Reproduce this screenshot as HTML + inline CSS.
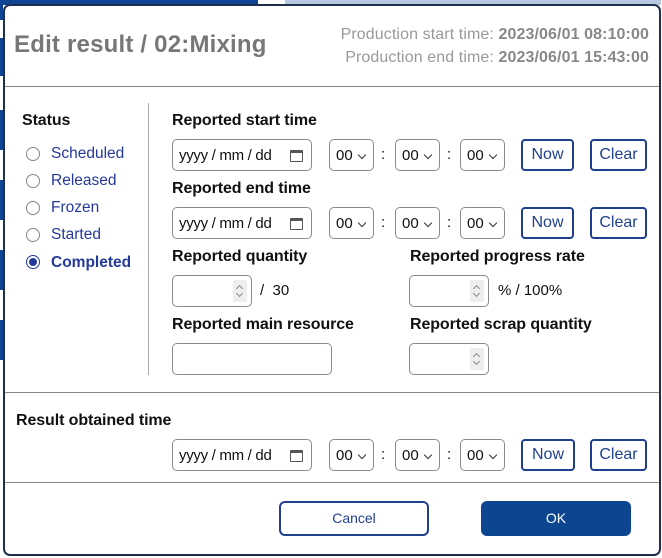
<!DOCTYPE html>
<html><head><style>
*{box-sizing:border-box;margin:0;padding:0}
body{width:662px;height:558px;background:#fff;position:relative;overflow:hidden;font-family:"Liberation Sans",Arial,sans-serif;color:#111}
.a{position:absolute}
.modal{left:3px;top:4px;width:658px;height:552px;border:2px solid #1f2d4f;border-radius:7px;background:#fff}
.lbl{font-weight:bold;font-size:16px;color:#111;letter-spacing:-0.1px}
.inp{border:1px solid #8a8a8a;border-radius:5px;background:#fff}
.date{width:140px;height:32px;font-size:15px;padding:7px 0 0 6px;letter-spacing:-0.3px}
.sel{width:45px;height:32px;font-size:15px;padding:7px 0 0 6px}
.sel:after{content:"";position:absolute;right:8px;top:12px;width:5px;height:5px;border-right:1.5px solid #333;border-bottom:1.5px solid #333;transform:rotate(45deg)}
.colon{font-size:15px}
.btn{height:32px;border:2px solid #1f3f8f;border-radius:4px;color:#1f3f8f;font-size:16px;text-align:center;line-height:28px;background:#fff}
.radio{width:14px;height:14px;border:1px solid #888;border-radius:50%}
.rl{font-size:15.5px;color:#24399a}
.spin{width:14px;height:22px;background:#eee;top:4px;right:4px}
.spin:before,.spin:after{content:"";position:absolute;left:4px;width:4px;height:4px;border-left:1px solid #888;border-top:1px solid #888}
.spin:before{top:6px;transform:rotate(45deg)}
.spin:after{top:11px;transform:rotate(225deg)}
.cal{width:13px;height:12px;border:1.5px solid #555;border-top-width:3px;border-radius:1px;right:8px;top:10px}
</style></head><body>
<div class="a" style="left:0;top:0;width:3px;height:20px;background:#0e4592"></div>
<div class="a" style="left:0;top:38px;width:3px;height:38px;background:#0e4592"></div>
<div class="a" style="left:0;top:110px;width:3px;height:40px;background:#0e4592"></div>
<div class="a" style="left:0;top:180px;width:3px;height:40px;background:#0e4592"></div>
<div class="a" style="left:0;top:250px;width:3px;height:40px;background:#0e4592"></div>
<div class="a" style="left:0;top:320px;width:3px;height:40px;background:#0e4592"></div>
<div class="a" style="left:3px;top:0;width:255px;height:5px;background:#0e4592"></div>
<div class="a" style="left:285px;top:0;width:376px;height:5px;background:#b8c8de"></div>
<div class="a modal"></div>
<div class="a" style="left:14px;top:31px;font-size:24px;color:#777;font-weight:bold;letter-spacing:0.2px">Edit result / 02:Mixing</div>
<div class="a" style="right:13px;top:23px;font-size:16px;color:#999;text-align:right;line-height:23px;letter-spacing:0.1px">Production start time: <b style="color:#888">2023/06/01 08:10:00</b><br>Production end time: <b style="color:#888">2023/06/01 15:43:00</b></div>
<div class="a" style="left:5px;top:86px;width:654px;height:1px;background:#888"></div>
<div class="a" style="left:148px;top:103px;width:1px;height:272px;background:#aaa"></div>
<div class="a lbl" style="left:22px;top:112px">Status</div>
<div class="a radio" style="left:26px;top:147px"></div><div class="a rl" style="left:51px;top:145px">Scheduled</div>
<div class="a radio" style="left:26px;top:174px"></div><div class="a rl" style="left:51px;top:172px">Released</div>
<div class="a radio" style="left:26px;top:201px"></div><div class="a rl" style="left:51px;top:199px">Frozen</div>
<div class="a radio" style="left:26px;top:228px"></div><div class="a rl" style="left:51px;top:226px">Started</div>
<div class="a radio" style="left:26px;top:255px;border:1.5px solid #24399a"><div class="a" style="left:2px;top:2px;width:8px;height:8px;border-radius:50%;background:#24399a"></div></div><div class="a rl" style="left:51px;top:254px;font-weight:bold">Completed</div>

<div class="a lbl" style="left:172px;top:112px">Reported start time</div>
<div class="a inp date" style="left:172px;top:139px">yyyy / mm / dd<div class="a cal"></div></div>
<div class="a inp sel" style="left:329px;top:139px">00</div><div class="a colon" style="left:381px;top:146px">:</div>
<div class="a inp sel" style="left:395px;top:139px">00</div><div class="a colon" style="left:447px;top:146px">:</div>
<div class="a inp sel" style="left:460px;top:139px">00</div>
<div class="a btn" style="left:521px;top:139px;width:53px">Now</div>
<div class="a btn" style="left:590px;top:139px;width:57px">Clear</div>

<div class="a lbl" style="left:172px;top:180px">Reported end time</div>
<div class="a inp date" style="left:172px;top:207px">yyyy / mm / dd<div class="a cal"></div></div>
<div class="a inp sel" style="left:329px;top:207px">00</div><div class="a colon" style="left:381px;top:214px">:</div>
<div class="a inp sel" style="left:395px;top:207px">00</div><div class="a colon" style="left:447px;top:214px">:</div>
<div class="a inp sel" style="left:460px;top:207px">00</div>
<div class="a btn" style="left:521px;top:207px;width:53px">Now</div>
<div class="a btn" style="left:590px;top:207px;width:57px">Clear</div>

<div class="a lbl" style="left:172px;top:248px">Reported quantity</div>
<div class="a lbl" style="left:410px;top:248px">Reported progress rate</div>
<div class="a inp" style="left:172px;top:275px;width:80px;height:32px"><div class="a spin"></div></div>
<div class="a" style="left:260px;top:282px;font-size:15px">/&nbsp; 30</div>
<div class="a inp" style="left:409px;top:275px;width:80px;height:32px"><div class="a spin"></div></div>
<div class="a" style="left:498px;top:282px;font-size:15px">% / 100%</div>
<div class="a lbl" style="left:172px;top:316px">Reported main resource</div>
<div class="a lbl" style="left:410px;top:316px">Reported scrap quantity</div>
<div class="a inp" style="left:172px;top:343px;width:160px;height:32px"></div>
<div class="a inp" style="left:409px;top:343px;width:80px;height:32px"><div class="a spin"></div></div>

<div class="a" style="left:5px;top:392px;width:654px;height:1px;background:#888"></div>
<div class="a lbl" style="left:16px;top:412px">Result obtained time</div>
<div class="a inp date" style="left:172px;top:439px">yyyy / mm / dd<div class="a cal"></div></div>
<div class="a inp sel" style="left:329px;top:439px">00</div><div class="a colon" style="left:381px;top:446px">:</div>
<div class="a inp sel" style="left:395px;top:439px">00</div><div class="a colon" style="left:447px;top:446px">:</div>
<div class="a inp sel" style="left:460px;top:439px">00</div>
<div class="a btn" style="left:521px;top:439px;width:54px">Now</div>
<div class="a btn" style="left:590px;top:439px;width:57px">Clear</div>

<div class="a" style="left:5px;top:482px;width:654px;height:1px;background:#888"></div>
<div class="a btn" style="left:279px;top:501px;width:150px;height:35px;line-height:31px;font-size:14px;border-radius:6px">Cancel</div>
<div class="a" style="left:481px;top:501px;width:150px;height:35px;border-radius:6px;background:#0d4690;color:#fff;text-align:center;line-height:35px;font-size:14px">OK</div>
</body></html>
